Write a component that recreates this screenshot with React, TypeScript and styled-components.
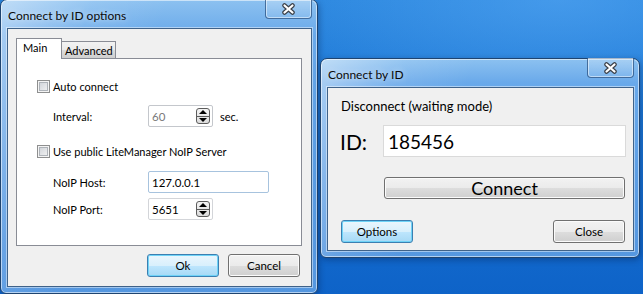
import React from "react";
import styled, { createGlobalStyle, css } from "styled-components";

const GlobalStyle = createGlobalStyle`
  html, body {
    margin: 0;
    padding: 0;
  }
  body {
    font-family: Lato, "Liberation Sans", sans-serif;
    font-size: 11px;
    color: #000;
  }
`;

const Desktop = styled.div`
  position: relative;
  width: 643px;
  height: 294px;
  overflow: hidden;
  background:
    radial-gradient(ellipse 420px 160px at 560px 0px, rgba(90, 170, 245, 0.55), rgba(90, 170, 245, 0) 70%),
    linear-gradient(180deg, #2a86de 0%, #1a74d4 45%, #0e63c8 100%);
`;

// windows sit on a free desktop canvas, so they are placed by coordinates
const Window = styled.div<{ $left: number; $top: number; $w: number; $h: number }>`
  position: absolute;
  left: ${(p) => p.$left}px;
  top: ${(p) => p.$top}px;
  width: ${(p) => p.$w}px;
  height: ${(p) => p.$h}px;
  box-sizing: border-box;
  display: flex;
  flex-direction: column;
  padding: 0 5px 6px 6px;
  border: 1px solid #1f4470;
  border-radius: 7px 7px 6px 6px;
  background:
    linear-gradient(110deg, rgba(255, 255, 255, 0.45) 0%, rgba(255, 255, 255, 0.1) 22%, rgba(255, 255, 255, 0) 40%),
    linear-gradient(180deg, #8cc1f0 0%, #69a9ea 12%, #5b9de4 60%, #5597e0 100%);
  box-shadow: inset 0 0 0 1px rgba(255, 255, 255, 0.55), 1px 2px 6px rgba(0, 20, 60, 0.35);
`;

const TitleBar = styled.div`
  display: flex;
  justify-content: space-between;
  height: 28px;
  flex-shrink: 0;
`;

const Title = styled.div`
  align-self: center;
  padding-left: 1px;
  padding-top: 2px;
  font-size: 12px;
  color: #0a0a0a;
  text-shadow: 0 0 6px rgba(255, 255, 255, 0.7);
`;

const CloseBtn = styled.div`
  align-self: flex-start;
  width: 45px;
  height: 19px;
  margin-top: -1px;
  display: flex;
  align-items: center;
  justify-content: center;
  border: 1px solid rgba(30, 70, 120, 0.7);
  border-top: none;
  border-radius: 0 0 4px 4px;
  background: linear-gradient(180deg, rgba(255, 255, 255, 0.25), rgba(255, 255, 255, 0.08));
  box-shadow: inset 0 0 0 1px rgba(255, 255, 255, 0.5);
`;

const Client = styled.div`
  flex: 1;
  display: flex;
  flex-direction: column;
  background: #f0f0f0;
  border: 1px solid #3f6289;
  box-shadow: 0 0 0 1px rgba(255, 255, 255, 0.45);
`;

const TabStrip = styled.div`
  display: flex;
  align-items: flex-end;
  margin: 9px 0 0 8px;
  height: 20px;
  position: relative;
  z-index: 1;
`;

const Tab = styled.div<{ $active?: boolean }>`
  box-sizing: border-box;
  display: flex;
  align-items: center;
  border: 1px solid #898c95;
  border-bottom: none;
  font-size: 11px;
  line-height: 14px;
  ${(p) =>
    p.$active
      ? css`
          width: 46px;
          height: 21px;
          padding: 0 0 2px 6px;
          background: #fff;
          margin-bottom: -1px;
        `
      : css`
          width: 55px;
          height: 17px;
          padding: 1px 0 0 3px;
          margin-left: -1px;
          background: linear-gradient(180deg, #f2f2f2 0%, #ebebeb 50%, #dddddd 51%, #cfcfcf 100%);
        `}
`;

const TabPanel = styled.div`
  box-sizing: border-box;
  height: 188px;
  margin: 0 9px 0 8px;
  padding: 21px 0 0 20px;
  background: #fff;
  border: 1px solid #898c95;
  display: flex;
  flex-direction: column;
`;

const CheckRow = styled.div<{ $mt: number }>`
  display: flex;
  align-items: center;
  gap: 3px;
  height: 13px;
  margin-top: ${(p) => p.$mt}px;
`;

const CheckBox = styled.div`
  box-sizing: border-box;
  width: 13px;
  height: 13px;
  border: 1px solid #8e8f8f;
  box-shadow: inset 0 0 0 1px #f4f4f4, inset 0 0 0 2px #aeb3b9;
  background-image: linear-gradient(135deg, #cbcfd5, #f6f6f6);
`;

const FieldRow = styled.div<{ $mt: number }>`
  display: grid;
  grid-template-columns: 88px auto auto;
  align-items: center;
  column-gap: 7px;
  margin: ${(p) => p.$mt}px 0 0 16px;
  height: 22px;
  justify-content: start;
`;

const Label = styled.div`
  font-size: 11px;
  color: #000;
`;

const Field = styled.div<{ $w: number; $disabled?: boolean; $focus?: boolean }>`
  box-sizing: border-box;
  width: ${(p) => p.$w}px;
  height: 22px;
  display: flex;
  align-items: center;
  justify-content: space-between;
  padding: 0 2px 0 3px;
  border: 1px solid ${(p) => (p.$focus ? "#a7c3de" : p.$disabled ? "#c4c7cc" : "#d3d5d9")};
  border-radius: 2px;
  background: #fff;
  font-size: 11.5px;
  color: ${(p) => (p.$disabled ? "#7a7a7a" : "#000")};
`;

const Spin = styled.div`
  box-sizing: border-box;
  width: 14px;
  height: 16px;
  display: flex;
  flex-direction: column;
  border: 1px solid #5c5c5c;
  border-radius: 3px;
  overflow: hidden;
  background: linear-gradient(180deg, #f4f4f4, #dcdcdc);
`;

const SpinHalf = styled.div<{ $down?: boolean }>`
  flex: 1;
  display: flex;
  align-items: center;
  justify-content: center;
  ${(p) => p.$down && "border-top: 1px solid #5c5c5c;"}
  &::after {
    content: "";
    width: 0;
    height: 0;
    border-left: 4px solid transparent;
    border-right: 4px solid transparent;
    ${(p) => (p.$down ? "border-top: 4px solid #000;" : "border-bottom: 4px solid #000;")}
  }
`;

const ButtonRow = styled.div<{ $mt: number; $justify: string; $pr?: number }>`
  display: flex;
  justify-content: ${(p) => p.$justify};
  gap: 9px;
  margin-top: ${(p) => p.$mt}px;
  padding-right: ${(p) => p.$pr ?? 0}px;
`;

const Button = styled.div<{ $default?: boolean; $w?: number; $h?: number; $size?: number }>`
  box-sizing: border-box;
  width: ${(p) => p.$w ?? 72}px;
  height: ${(p) => p.$h ?? 23}px;
  display: flex;
  align-items: center;
  justify-content: center;
  border-radius: 3px;
  font-size: ${(p) => p.$size ?? 11.5}px;
  color: #000;
  ${(p) =>
    p.$default
      ? css`
          border: 1px solid #3c7fb1;
          background: linear-gradient(180deg, #eaf6fd 0%, #d9f0fc 50%, #bee6fd 51%, #a7d9f5 100%);
          box-shadow: inset 0 0 0 1px #6fd3f7;
        `
      : css`
          border: 1px solid #707070;
          background: linear-gradient(180deg, #f2f2f2 0%, #ebebeb 50%, #dddddd 51%, #cfcfcf 100%);
          box-shadow: inset 0 0 0 1px #fbfbfb;
        `}
`;

const StatusText = styled.div`
  margin: 9px 0 0 13px;
  font-size: 13px;
  height: 18px;
  line-height: 18px;
`;

const IdRow = styled.div`
  display: flex;
  align-items: center;
  margin: 10px 7px 0 12px;
  gap: 14px;
`;

const IdLabel = styled.div`
  font-size: 21px;
  width: 29px;
`;

const IdField = styled.div`
  box-sizing: border-box;
  flex: 1;
  height: 32px;
  display: flex;
  align-items: center;
  padding-left: 4px;
  background: #fff;
  border: 1px solid #dadada;
  font-size: 19px;
`;

const ActionArea = styled.div`
  display: flex;
  flex-direction: column;
  padding: 0 8px 0 13px;
`;

const CloseIcon = () => (
  <svg width="15" height="12" viewBox="0 0 15 12">
    <path d="M3.5 2.5 L11.5 9.5 M11.5 2.5 L3.5 9.5" stroke="#3a3f47" strokeWidth="4.5" strokeLinecap="round" />
    <path d="M3.5 2.5 L11.5 9.5 M11.5 2.5 L3.5 9.5" stroke="#ffffff" strokeWidth="2.2" strokeLinecap="round" />
  </svg>
);

const SpinField = ({ value, w, disabled }: { value: string; w: number; disabled?: boolean }) => (
  <Field $w={w} $disabled={disabled}>
    <span>{value}</span>
    <Spin>
      <SpinHalf />
      <SpinHalf $down />
    </Spin>
  </Field>
);

const OptionsWindow = () => (
  <Window $left={0} $top={-1} $w={318} $h={295}>
    <TitleBar>
      <Title>Connect by ID options</Title>
      <CloseBtn>
        <CloseIcon />
      </CloseBtn>
    </TitleBar>
    <Client>
      <TabStrip>
        <Tab $active>Main</Tab>
        <Tab>Advanced</Tab>
      </TabStrip>
      <TabPanel>
        <CheckRow $mt={0}>
          <CheckBox />
          <Label>Auto connect</Label>
        </CheckRow>
        <FieldRow $mt={12}>
          <Label>Interval:</Label>
          <SpinField value="60" w={65} disabled />
          <Label>sec.</Label>
        </FieldRow>
        <CheckRow $mt={18}>
          <CheckBox />
          <Label>Use public LiteManager NoIP Server</Label>
        </CheckRow>
        <FieldRow $mt={13}>
          <Label>NoIP Host:</Label>
          <Field $w={121} $focus>
            127.0.0.1
          </Field>
        </FieldRow>
        <FieldRow $mt={5}>
          <Label>NoIP Port:</Label>
          <SpinField value="5651" w={65} />
        </FieldRow>
      </TabPanel>
      <ButtonRow $mt={8} $justify="flex-end" $pr={11}>
        <Button $default>Ok</Button>
        <Button>Cancel</Button>
      </ButtonRow>
    </Client>
  </Window>
);

const ConnectWindow = () => (
  <Window $left={320} $top={58} $w={320} $h={200}>
    <TitleBar>
      <Title>Connect by ID</Title>
      <CloseBtn>
        <CloseIcon />
      </CloseBtn>
    </TitleBar>
    <Client>
      <StatusText>Disconnect (waiting mode)</StatusText>
      <IdRow>
        <IdLabel>ID:</IdLabel>
        <IdField>185456</IdField>
      </IdRow>
      <ActionArea>
        <ButtonRow $mt={20} $justify="flex-end">
          <Button $w={241} $h={22} $size={18}>
            Connect
          </Button>
        </ButtonRow>
        <ButtonRow $mt={21} $justify="space-between">
          <Button $default>Options</Button>
          <Button>Close</Button>
        </ButtonRow>
      </ActionArea>
    </Client>
  </Window>
);

export default function App() {
  return (
    <>
      <GlobalStyle />
      <Desktop>
        <OptionsWindow />
        <ConnectWindow />
      </Desktop>
    </>
  );
}
